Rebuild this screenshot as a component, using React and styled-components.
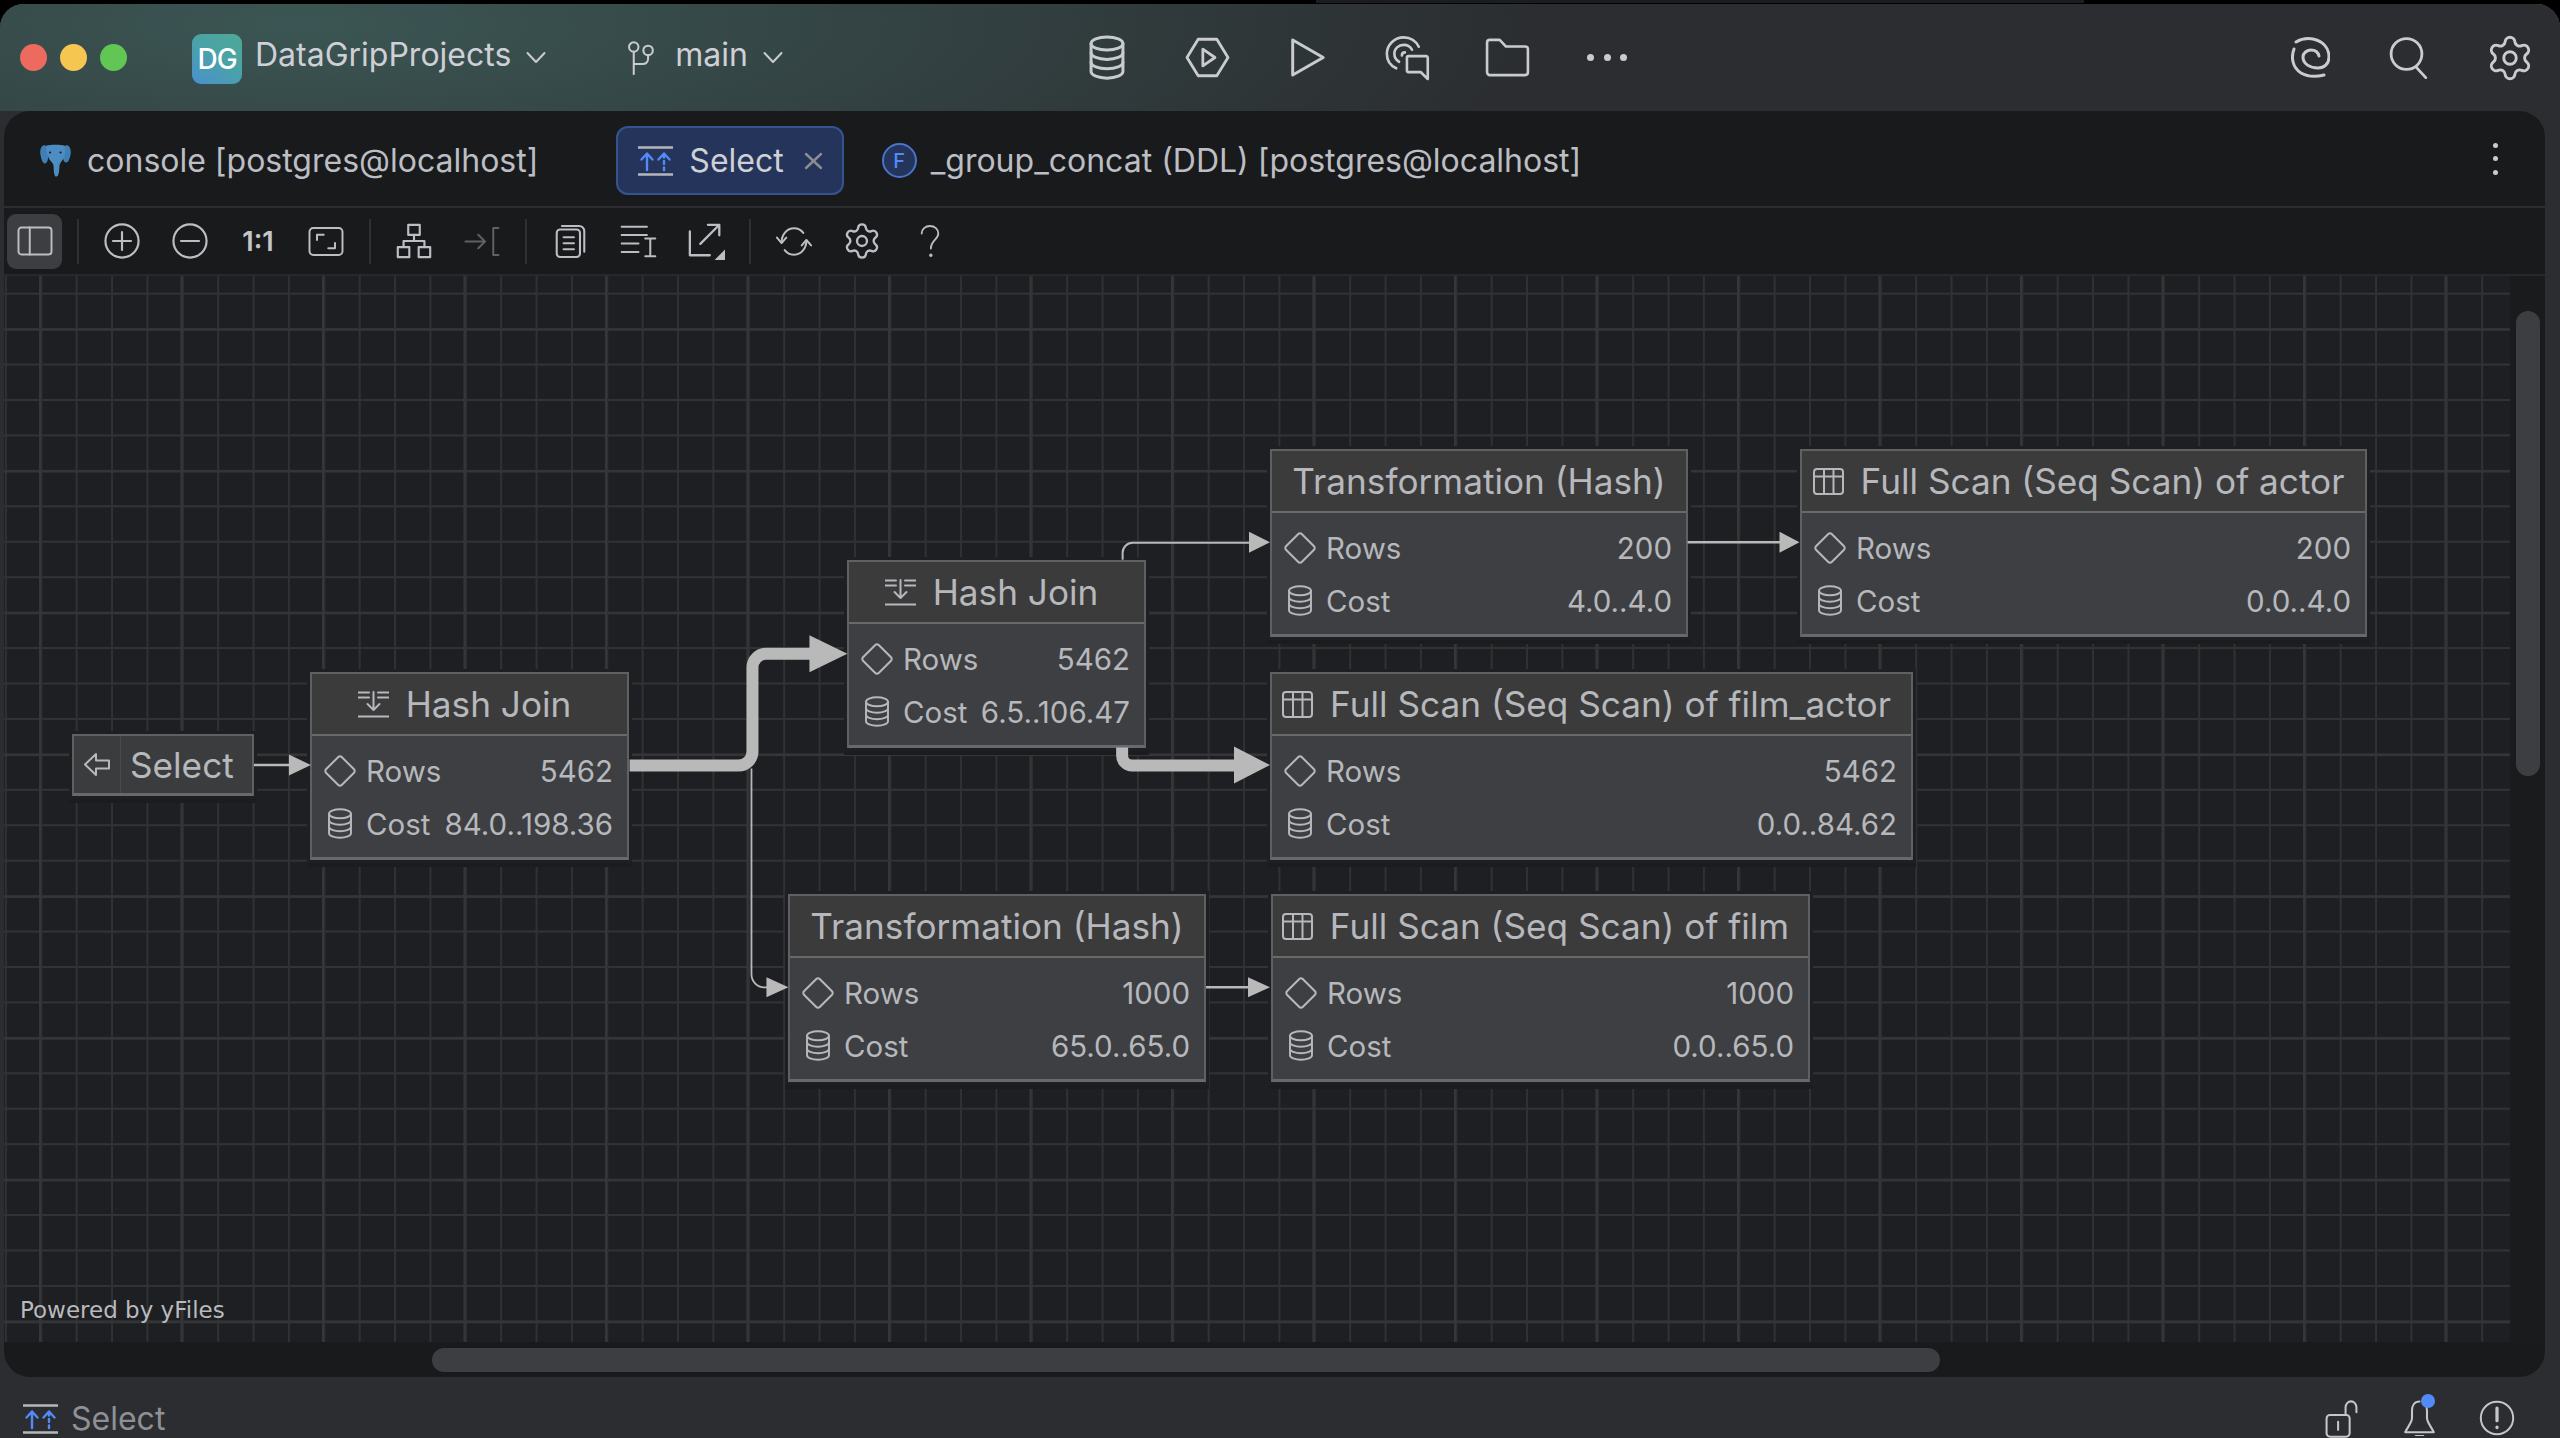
import React from 'react'
import styled, { createGlobalStyle } from 'styled-components'
import { Settings } from 'lucide-react'

const GlobalStyle = createGlobalStyle`
  html, body { margin: 0; padding: 0; background: #000; }
  body { font-family: Inter, "Liberation Sans", sans-serif; color: #bcbec4; }
  * { box-sizing: border-box; }
`

const Glyph = ({ w, h, vw, vh, sw = 1.2, children, ...rest }) => (
  <GlyphSvg width={w} height={h} viewBox={`0 0 ${vw} ${vh}`} strokeWidth={sw} {...rest}>{children}</GlyphSvg>
)

const DbIcon = ({ w = 40, h = 45, sw = 1.6 }) => (
  <Glyph w={w} h={h} vw={20} vh={24} sw={sw}>
    <ellipse cx="10" cy="4.5" rx="8.5" ry="3.5" />
    <path d="M1.5 4.5v15c0 1.9 3.8 3.5 8.5 3.5s8.5-1.6 8.5-3.5v-15" />
    <path d="M1.5 9.5c0 1.9 3.8 3.5 8.5 3.5s8.5-1.6 8.5-3.5" />
    <path d="M1.5 14.5c0 1.9 3.8 3.5 8.5 3.5s8.5-1.6 8.5-3.5" />
  </Glyph>
)
const HexPlayIcon = () => (
  <Glyph w={47} h={41} vw={24} vh={22} sw={1.5}>
    <path d="M7 1.2h10L23 11l-6 9.8H7L1 11z" />
    <path d="M9.5 6.5v9l6.5-4.5z" />
  </Glyph>
)
const PlayIcon = () => (
  <Glyph w={37} h={41} vw={20} vh={22} sw={1.6}>
    <path d="M2 1.5L18.5 11 2 20.5z" />
  </Glyph>
)
const ChatIcon = () => (
  <Glyph w={45} h={46} vw={24} vh={24} sw={1.4}>
    <path d="M6 17.5C2.8 16 1 13 1 9.7 1 5 5 1 10 1c3.5 0 6.6 2 8 5" />
    <path d="M7.5 14C5.8 13 5 11.4 5 9.7 5 7 7.2 5 10 5c2 0 3.6 1 4.4 2.6" />
    <path d="M9 10.6c0-1 .6-1.6 1.6-1.6" />
    <path d="M12.5 11H22a.8.8 0 01.8.8v11.4L19 19.5h-6.5a.8.8 0 01-.8-.8v-6.9a.8.8 0 01.8-.8z" />
  </Glyph>
)
const FolderIcon = () => (
  <Glyph w={45} h={39} vw={24} vh={21} sw={1.4}>
    <path d="M1 2.5A1.5 1.5 0 012.5 1h5.3l3.4 3.6h10.3A1.5 1.5 0 0123 6.1v12.4a1.5 1.5 0 01-1.5 1.5h-19A1.5 1.5 0 011 18.5z" />
  </Glyph>
)
const SpiralIcon = () => (
  <Glyph w={39} h={41} vw={39} vh={41} sw={3}>
    <path d="M5 5C10 2 16 1 22 2c10 2 16 9 16 18 0 7-5 11-11 11-8 0-15-4-15-11 0-4 4-7 8-7 4 0 7 2 8 6" />
    <path d="M3 12C0 20 1 30 10 36c7 4 15 4 23 2" />
  </Glyph>
)
const SearchIcon = () => (
  <Glyph w={42} h={43} vw={24} vh={24} sw={1.6}>
    <circle cx="10" cy="10" r="8.8" />
    <path d="M15.5 17.5l5.5 6" />
  </Glyph>
)
const PlusIcon = () => (
  <Glyph w={36} h={36} vw={20} vh={20}>
    <circle cx="10" cy="10" r="9.2" />
    <path d="M10 5v10M5 10h10" />
  </Glyph>
)
const MinusIcon = () => (
  <Glyph w={36} h={36} vw={20} vh={20}>
    <circle cx="10" cy="10" r="9.2" />
    <path d="M5 10h10" />
  </Glyph>
)
const ToggleIcon = () => (
  <Glyph w={36} h={30} vw={24} vh={20} sw={1.3}>
    <rect x="1" y="1" width="22" height="18" rx="2" />
    <path d="M8.5 1v18" />
  </Glyph>
)
const FrameIcon = () => (
  <Glyph w={36} h={31} vw={24} vh={20} sw={1.3}>
    <rect x="1" y="1" width="22" height="18" rx="2.5" />
    <path d="M6 9V5.500h4.500M18 11v3.500h-4.500" />
  </Glyph>
)
const HierarchyIcon = () => (
  <Glyph w={36} h={36} vw={20} vh={20} sw={1.2}>
    <rect x="6.8" y="1" width="6.4" height="5.6" />
    <rect x="1" y="13.4" width="6.4" height="5.6" />
    <rect x="12.6" y="13.4" width="6.4" height="5.6" />
    <path d="M10 6.6v3.4M4.2 13.4V10h11.6v3.4" />
  </Glyph>
)
const ArrowBracketIcon = () => (
  <DimIcon>
    <Glyph w={36} h={31} vw={24} vh={20} sw={1.3}>
      <path d="M1 10h13M9.500 5.500L14 10l-4.500 4.500" />
      <path d="M23 1h-3.500v18H23" />
    </Glyph>
  </DimIcon>
)
const CopyIcon = () => (
  <Glyph w={31} h={35} vw={18} vh={20} sw={1.2}>
    <rect x="1" y="3" width="13.500" height="16" rx="2" />
    <path d="M4 1h10a3 3 0 013 3v12" />
    <path d="M5 7.500h6M5 11h6M5 14.500h6" />
  </Glyph>
)
const ListCursorIcon = () => (
  <Glyph w={37} h={34} vw={22} vh={20} sw={1.2}>
    <path d="M1 1.500h15M1 6.500h15M1 11.500h10M1 16.500h10" />
    <path d="M15 8.500h6M18 8.500v10.500M15 19h6" />
  </Glyph>
)
const ExportIcon = () => (
  <Glyph w={38} h={38} vw={20} vh={20} sw={1.2}>
    <path d="M1.500 5V17.500H12" />
    <path d="M7 11.500L16.500 2M11 1.500h6V7" />
    <path d="M20 14.500V20h-5.500z" fill="#bcbec4" stroke="none" />
  </Glyph>
)
const RefreshIcon = () => (
  <Glyph w={40} h={31} vw={24} vh={20} sw={1.3}>
    <path d="M4 10.500C4 5.500 7.500 1.500 12 1.500c2.500 0 4.500 1 6 3" />
    <path d="M20 9.500c0 5-3.500 9-8 9-2.500 0-4.500-1-6-3" />
    <path d="M1 7.500l3 3.500 3-3.500M17 12.500l3-3.500 3 3.500" />
  </Glyph>
)
const QuestionIcon = () => (
  <Glyph w={20} h={36} vw={12} vh={20} sw={1.1}>
    <path d="M1 5.500C1 3 3.200 1 6 1s5 2 5 4.500c0 3.500-4.500 4-4.500 9" />
    <circle cx="6.500" cy="18.500" r=".5" />
  </Glyph>
)
const BranchIcon = () => (
  <Glyph w={27} h={34} vw={16} vh={20} sw={1.2}>
    <circle cx="4" cy="3.500" r="2.800" />
    <circle cx="12.500" cy="5.500" r="2.800" />
    <path d="M4 6.300V19.500M12.500 8.300v2.200c0 2-1.500 3-3 3H4" />
  </Glyph>
)
const Chevron = () => (
  <Glyph w={20} h={13} vw={20} vh={13} sw={2}>
    <path d="M1.500 2L10 11l8.500-9" />
  </Glyph>
)
const CloseIcon = () => (
  <Glyph w={19} h={18} vw={19} vh={18} sw={2.4}>
    <path d="M2 2l15 14M17 2L2 16" />
  </Glyph>
)
const SelectPlanIcon = ({ w = 35, h = 30 }) => (
  <Glyph w={w} h={h} vw={35} vh={30} sw={2.4}>
    <path d="M0 1.500h35M0 28.500h35" stroke="#b4b6ba" />
    <path d="M9 24V8M3.500 13.500L9 7.500l5.500 6" stroke="#548af7" />
    <path d="M26 24v-2.500M26 18v-3M26 11.500V8M20.500 13.500l5.500-6 5.500 6" stroke="#548af7" />
  </Glyph>
)
const ElephantIcon = () => (
  <svg width="31" height="33" viewBox="0 0 31 33">
    <path d="M4 1C1 2-.5 6 .5 11c.8 4 2 8 4 8.500 1.500.4 3-2 3.500-4.500L8.500 3z" fill="#3f7fb3" />
    <path d="M27 1c3 1 4.500 5 3.500 10-.8 4-2 7-4 7.500-1.500.4-3-1.500-3.500-4L22.500 3z" fill="#3f7fb3" />
    <path d="M6.500 1.500C10 .5 21 .5 24.500 1.500c1.500 5 .5 11-2 14.500-1.200 1.700-2.500 3-3 5.500-.4 3 0 7-1.500 10-.6 1.200-2.500 1.500-3.200.2-1.300-2.700-1-7-1.300-10.200-.3-2.500-2.500-3.800-4-6C7.500 12 5.500 6 6.500 1.500z" fill="#4d8dc2" />
    <path d="M10 8.500h.1M20.500 8.500h.1" stroke="#16222c" strokeWidth="2.200" strokeLinecap="round" />
  </svg>
)
const DiamondIcon = () => (
  <Glyph w={32} h={32} vw={32} vh={32} sw={2}>
    <path d="M14.300 2a2.400 2.400 0 013.400 0L30 14.300a2.400 2.400 0 010 3.400L17.700 30a2.400 2.400 0 01-3.400 0L2 17.700a2.400 2.400 0 010-3.400z" />
  </Glyph>
)
const TableIcon = () => (
  <Glyph w={31} h={27} vw={31} vh={27} sw={2}>
    <rect x="1" y="1" width="29" height="25" rx="3" />
    <path d="M1 8.500h29M11 1v25M20.500 1v25" />
  </Glyph>
)
const JoinIcon = () => (
  <Glyph w={31} h={27} vw={31} vh={27} sw={2}>
    <path d="M0 1.500h11M0 6.500h11M20 1.500h11M20 6.500h11M0 25.500h31" />
    <path d="M15.500 1v18M9.500 13l6 6 6-6" />
  </Glyph>
)
const BackArrowIcon = () => (
  <Glyph w={28} h={25} vw={28} vh={25} sw={2}>
    <path d="M13 2L2 12.500 13 23v-6.500h13v-8H13z" />
  </Glyph>
)
const LockIcon = () => (
  <Glyph w={33} h={38} vw={24} vh={28} sw={1.500}>
    <rect x="1" y="11" width="17" height="16" rx="2.500" />
    <path d="M9.500 16v6" />
    <path d="M15 11V5.500C15 3 16.800 1 19 1s4 2 4 4.500V9" />
  </Glyph>
)
const BellIcon = () => (
  <Glyph w={33} h={36} vw={22} vh={24} sw={1.400}>
    <path d="M11 1C7.500 1 6 4 6 7v5c0 3-3 6-4.500 9.500h19C19 18 16 15 16 12V7c0-1.500-.3-2.500-1-3.500" />
    <path d="M8.500 24h5" />
  </Glyph>
)
const AlertIcon = () => (
  <Glyph w={36} h={36} vw={20} vh={20} sw={1.100}>
    <circle cx="10" cy="10" r="9" />
    <path d="M10 4.500v7" strokeWidth="1.800" />
    <path d="M10 15v.3" strokeWidth="1.800" />
  </Glyph>
)

const ORIGIN_X = 4
const ORIGIN_Y = 275

const nodes = [
  { x: 310, y: 671, w: 319, title: 'Hash Join', icon: <JoinIcon />, rows: '5462', cost: '84.0..198.36' },
  { x: 847, y: 559, w: 299, title: 'Hash Join', icon: <JoinIcon />, rows: '5462', cost: '6.5..106.47' },
  { x: 1270, y: 448, w: 418, title: 'Transformation (Hash)', rows: '200', cost: '4.0..4.0' },
  { x: 1800, y: 448, w: 567, title: 'Full Scan (Seq Scan) of actor', icon: <TableIcon />, rows: '200', cost: '0.0..4.0' },
  { x: 1270, y: 671, w: 643, title: 'Full Scan (Seq Scan) of film_actor', icon: <TableIcon />, rows: '5462', cost: '0.0..84.62' },
  { x: 788, y: 893, w: 418, title: 'Transformation (Hash)', rows: '1000', cost: '65.0..65.0' },
  { x: 1271, y: 893, w: 539, title: 'Full Scan (Seq Scan) of film', icon: <TableIcon />, rows: '1000', cost: '0.0..65.0' },
]

const PlanNode = ({ node }) => (
  <NodeBox $x={node.x - ORIGIN_X} $y={node.y - ORIGIN_Y} $w={node.w}>
    <NodeHead $hasIcon={Boolean(node.icon)}>
      {node.icon}
      <span>{node.title}</span>
    </NodeHead>
    <NodeBody>
      <NodeRow><IconCell><DiamondIcon /></IconCell><span>Rows</span><Value>{node.rows}</Value></NodeRow>
      <NodeRow><IconCell><DbIcon w={26} h={31} sw={1.5} /></IconCell><span>Cost</span><Value>{node.cost}</Value></NodeRow>
    </NodeBody>
  </NodeBox>
)

const Edges = () => (
  <EdgeSvg viewBox={`${ORIGIN_X} ${ORIGIN_Y} 2506 1067`}>
    <g fill="none" stroke="#b9b9b9">
      <path d="M253 764.500H290" strokeWidth="2.500" />
      <path d="M629 765H738a14 14 0 0014-14V667a14 14 0 0114-14H812" strokeWidth="12" />
      <path d="M751 768V974a13 13 0 0013 13h4" strokeWidth="1.800" />
      <path d="M1122.500 559V552a10 10 0 0110-10H1251" strokeWidth="2" />
      <path d="M1122 747V755a10 10 0 0010 10H1236" strokeWidth="12" />
      <path d="M1688 541.500H1781" strokeWidth="2.500" />
      <path d="M1206 987H1250" strokeWidth="2.500" />
    </g>
    <g fill="#b9b9b9">
      <path d="M288 754L310 764.500 288 775z" />
      <path d="M809 634.500L847 653 809 671.500z" />
      <path d="M766 977L788 987 766 997z" />
      <path d="M1249 531L1270 541.500 1249 552z" />
      <path d="M1234 746L1270 764.500 1234 783z" />
      <path d="M1780 531L1800 541.500 1780 552z" />
      <path d="M1248 977L1270 987 1248 997z" />
    </g>
  </EdgeSvg>
)

export default function App() {
  return (
    <Screen>
      <GlobalStyle />
      <TopStrip><BehindWindow /></TopStrip>
      <Window>
        <TitleBar>
          <LeftGroup>
            <Lights>
              <Light $c="#ed6a5e" />
              <Light $c="#f5c750" />
              <Light $c="#62c655" />
            </Lights>
            <Logo>DG</Logo>
            <Project>DataGripProjects</Project>
            <Chevron />
            <Branch>
              <BranchIcon />
              <BranchName>main</BranchName>
              <Chevron />
            </Branch>
          </LeftGroup>
          <BarSlot><DbIcon /></BarSlot>
          <BarSlot><HexPlayIcon /></BarSlot>
          <BarSlot><PlayIcon /></BarSlot>
          <BarSlot><ChatIcon /></BarSlot>
          <BarSlot><FolderIcon /></BarSlot>
          <BarSlot><Dots><i /><i /><i /></Dots></BarSlot>
          <RightGroup>
            <BarSlot><SpiralIcon /></BarSlot>
            <BarSlot><SearchIcon /></BarSlot>
            <BarSlot><Settings size={50} strokeWidth={1.4} /></BarSlot>
          </RightGroup>
        </TitleBar>

        <Panel>
          <TabRow>
            <Tab>
              <ElephantIcon />
              <span>console [postgres@localhost]</span>
            </Tab>
            <Tab $active>
              <SelectPlanIcon />
              <span>Select</span>
              <CloseSlot><CloseIcon /></CloseSlot>
            </Tab>
            <Tab>
              <FuncBadge>F</FuncBadge>
              <span>_group_concat (DDL) [postgres@localhost]</span>
            </Tab>
            <Kebab><i /><i /><i /></Kebab>
          </TabRow>

          <Toolbar>
            <ToggleBtn><ToggleIcon /></ToggleBtn>
            <Sep />
            <ToolBtn><PlusIcon /></ToolBtn>
            <ToolBtn><MinusIcon /></ToolBtn>
            <ToolBtn><OneToOne>1:1</OneToOne></ToolBtn>
            <ToolBtn><FrameIcon /></ToolBtn>
            <Sep />
            <ToolBtn><HierarchyIcon /></ToolBtn>
            <ToolBtn><ArrowBracketIcon /></ToolBtn>
            <Sep />
            <ToolBtn><CopyIcon /></ToolBtn>
            <ToolBtn><ListCursorIcon /></ToolBtn>
            <ToolBtn><ExportIcon /></ToolBtn>
            <Sep />
            <ToolBtn><RefreshIcon /></ToolBtn>
            <ToolBtn><Settings size={40} strokeWidth={1.4} /></ToolBtn>
            <ToolBtn><QuestionIcon /></ToolBtn>
          </Toolbar>

          <CanvasRow>
            <Canvas>
              <SelectNode>
                <SelectIconCell><BackArrowIcon /></SelectIconCell>
                <SelectLabel>Select</SelectLabel>
              </SelectNode>
              {nodes.map((node) => <PlanNode key={`${node.x}-${node.y}`} node={node} />)}
              <Edges />
              <Powered>Powered by yFiles</Powered>
            </Canvas>
            <VTrack><VThumb /></VTrack>
          </CanvasRow>
          <HTrack><HThumb /></HTrack>
        </Panel>

        <StatusBar>
          <SelectPlanIcon />
          <StatusLabel>Select</StatusLabel>
          <StatusIcons>
            <StatusSlot><LockIcon /></StatusSlot>
            <StatusSlot>
              <BellIcon />
              <BellDot />
            </StatusSlot>
            <StatusSlot><AlertIcon /></StatusSlot>
          </StatusIcons>
        </StatusBar>
      </Window>
    </Screen>
  )
}

const GlyphSvg = styled.svg`
  fill: none;
  stroke: currentColor;
  stroke-linecap: round;
  stroke-linejoin: round;
  flex: none;
`
const DimIcon = styled.span`
  display: flex;
  color: #5f6164;
`

const Screen = styled.div`
  width: 2560px;
  height: 1438px;
  background: #000;
  overflow: hidden;
`
const TopStrip = styled.div`
  height: 4px;
  padding-left: 1316px;
`
const BehindWindow = styled.div`
  width: 768px;
  height: 3px;
  background: #1c1d1f;
`
const Window = styled.div`
  height: 1434px;
  display: flex;
  flex-direction: column;
  background: #2b2d30;
  border-radius: 24px 24px 0 0;
  box-shadow: inset 0 2px 0 #5f6164;
  overflow: hidden;
`
const TitleBar = styled.div`
  height: 107px;
  flex: none;
  display: flex;
  align-items: center;
  color: #c9cbcf;
  background:
    radial-gradient(ellipse 1250px 300px at 300px 20px, #3b5654 0%, rgba(59, 86, 84, 0.55) 45%, rgba(43, 45, 48, 0) 100%),
    #2b2d30;
`
const LeftGroup = styled.div`
  width: 1057px;
  flex: none;
  display: flex;
  align-items: center;
  padding-left: 20px;
`
const Lights = styled.div`
  display: flex;
  gap: 13px;
`
const Light = styled.span`
  width: 27px;
  height: 27px;
  border-radius: 50%;
  background: ${(p) => p.$c};
`
const Logo = styled.div`
  width: 50px;
  height: 50px;
  margin: 2px 0 0 65px;
  border-radius: 9px;
  background: linear-gradient(35deg, #4a90cf 0%, #4aa3a6 55%, #4fa897 100%);
  color: #fff;
  font-size: 28px;
  font-weight: 500;
  letter-spacing: -1px;
  display: flex;
  align-items: center;
  justify-content: center;
`
const Project = styled.span`
  margin: 0 15px 6px 13px;
  font-size: 32px;
  color: #ced0d6;
`
const Branch = styled.div`
  display: flex;
  align-items: center;
  margin-left: 81px;
`
const BranchName = styled.span`
  margin: 0 15px 6px 21px;
  font-size: 32px;
  color: #ced0d6;
`
const BarSlot = styled.div`
  width: 100px;
  flex: none;
  display: flex;
  justify-content: center;
  align-items: center;
`
const Dots = styled.div`
  display: flex;
  gap: 9.5px;
  i {
    width: 7px;
    height: 7px;
    border-radius: 50%;
    background: #c9cbcf;
  }
`
const RightGroup = styled.div`
  margin-left: auto;
  display: flex;
`
const Panel = styled.div`
  flex: none;
  height: 1266px;
  margin: 0 15px 0 4px;
  display: flex;
  flex-direction: column;
  background: #191a1c;
  border-radius: 26px;
  overflow: hidden;
`
const TabRow = styled.div`
  height: 97px;
  flex: none;
  display: flex;
  align-items: center;
  gap: 19px;
  padding: 0 0 0 14px;
  border-bottom: 2px solid #2b2d30;
`
const Tab = styled.div`
  height: 69px;
  margin-top: 4px;
  display: flex;
  align-items: center;
  gap: 16px;
  padding: 0 ${(p) => (p.$active ? '21px' : '59px')} 0 22px;
  border-radius: 12px;
  font-size: 32px;
  color: ${(p) => (p.$active ? '#ced0d6' : '#bcbec4')};
  background: ${(p) => (p.$active ? '#25345a' : 'transparent')};
  box-shadow: ${(p) => (p.$active ? 'inset 0 0 0 2px #35538f' : 'none')};
`
const CloseSlot = styled.span`
  display: flex;
  color: #8b8d92;
  margin-left: 4px;
`
const FuncBadge = styled.span`
  width: 35px;
  height: 35px;
  margin: 0 -2px 0 -3px;
  border-radius: 50%;
  border: 2px solid #4a74c9;
  background: #25345a;
  color: #548af7;
  font-size: 20px;
  font-weight: 500;
  display: flex;
  align-items: center;
  justify-content: center;
`
const Kebab = styled.div`
  margin-left: auto;
  margin-right: 47px;
  display: flex;
  flex-direction: column;
  gap: 8.5px;
  i {
    width: 5px;
    height: 5px;
    border-radius: 50%;
    background: #c9cbcf;
  }
`
const Toolbar = styled.div`
  height: 68px;
  flex: none;
  display: flex;
  align-items: center;
  padding-left: 3px;
  color: #bcbec4;
  border-bottom: 2px solid #26282a;
`
const ToolBtn = styled.div`
  width: 68px;
  flex: none;
  display: flex;
  justify-content: center;
  align-items: center;
`
const ToggleBtn = styled(ToolBtn)`
  width: 55px;
  height: 55px;
  margin-right: 6px;
  border-radius: 9px;
  background: #3c3e41;
`
const Sep = styled.div`
  width: 20px;
  height: 45px;
  flex: none;
  &::before {
    content: '';
    display: block;
    width: 2px;
    height: 100%;
    margin-left: 9px;
    background: #2e3033;
  }
`
const OneToOne = styled.span`
  font-size: 27px;
  font-weight: 600;
  color: #c4c6ca;
`
const CanvasRow = styled.div`
  flex: 1;
  min-height: 0;
  display: flex;
`
const Canvas = styled.div`
  position: relative;
  width: 2506px;
  flex: none;
  overflow: hidden;
  background-color: #1e1f22;
  background-image:
    linear-gradient(90deg, #353638 2px, transparent 2px),
    linear-gradient(180deg, #343537 2px, transparent 2px),
    linear-gradient(90deg, #303133 2px, transparent 2px),
    linear-gradient(180deg, #323335 2px, transparent 2px);
  background-size: 141.5px 100%, 100% 141.8px, 35.375px 100%, 100% 35.45px;
  background-position: 35px 0, 0 52.7px, 0.95px 0, 0 16.7px;
`
const EdgeSvg = styled.svg`
  position: absolute;
  inset: 0;
  width: 100%;
  height: 100%;
`
const NodeBox = styled.div`
  position: absolute;
  left: ${(p) => p.$x}px;
  top: ${(p) => p.$y}px;
  width: ${(p) => p.$w}px;
  height: 188px;
  display: flex;
  flex-direction: column;
  color: #b6b8bc;
  border: 2px solid #5f6062;
  border-bottom: 3px solid #68696b;
  box-shadow: 0 0 0 3px #1e1f22, 0 4px 0 3px #1b1c1e;
`
const NodeHead = styled.div`
  height: 62px;
  flex: none;
  display: flex;
  align-items: center;
  justify-content: center;
  gap: 17px;
  padding: 0 ${(p) => (p.$hasIcon ? '20px' : '10px')} 0 10px;
  background: #3b3b3c;
  border-bottom: 2px solid #68696b;
  font-size: 35.2px;
  white-space: nowrap;
`
const NodeBody = styled.div`
  flex: 1;
  padding-top: 8px;
  background: #3e3f42;
`
const NodeRow = styled.div`
  height: 53px;
  display: flex;
  align-items: center;
  padding-right: 14px;
  font-size: 29.5px;
`
const IconCell = styled.span`
  width: 54px;
  flex: none;
  display: flex;
  justify-content: center;
  padding-left: 2px;
`
const Value = styled.span`
  margin-left: auto;
  white-space: nowrap;
`
const SelectNode = styled.div`
  position: absolute;
  left: ${72 - ORIGIN_X}px;
  top: ${733 - ORIGIN_Y}px;
  width: 182px;
  height: 62px;
  display: flex;
  align-items: center;
  background: #3b3c3d;
  border: 2px solid #5f6062;
  border-bottom: 3px solid #68696b;
  box-shadow: 0 0 0 3px #1e1f22, 0 4px 0 3px #1b1c1e;
  color: #b6b8bc;
`
const SelectIconCell = styled.span`
  width: 47px;
  height: 100%;
  flex: none;
  display: flex;
  align-items: center;
  justify-content: center;
  border-right: 1px solid #4a4b4d;
`
const SelectLabel = styled.span`
  margin-left: 9px;
  font-size: 35.2px;
`
const Powered = styled.div`
  position: absolute;
  left: 16px;
  bottom: 19px;
  font-family: "DejaVu Sans", sans-serif;
  font-size: 23px;
  color: #b8babd;
`
const VTrack = styled.div`
  flex: 1;
  padding: 35px 0 0 6px;
  background: #1a1b1d;
`
const VThumb = styled.div`
  width: 24px;
  height: 465px;
  border-radius: 12px;
  background: #3c3e41;
`
const HTrack = styled.div`
  height: 35px;
  flex: none;
  padding: 6px 0 0 428px;
`
const HThumb = styled.div`
  width: 1508px;
  height: 24px;
  border-radius: 12px;
  background: #3c3e41;
`
const StatusBar = styled.div`
  flex: 1;
  display: flex;
  align-items: center;
  padding: 22px 0 0 23px;
  color: #8e9095;
  overflow: hidden;
`
const StatusLabel = styled.span`
  margin-left: 13px;
  font-size: 32px;
`
const StatusIcons = styled.div`
  margin-left: auto;
  margin-right: 24px;
  display: flex;
  color: #c4c6ca;
`
const StatusSlot = styled.div`
  position: relative;
  width: 78px;
  display: flex;
  justify-content: center;
`
const BellDot = styled.span`
  position: absolute;
  left: 41px;
  top: -6px;
  width: 14px;
  height: 14px;
  border-radius: 50%;
  background: #548af7;
`
